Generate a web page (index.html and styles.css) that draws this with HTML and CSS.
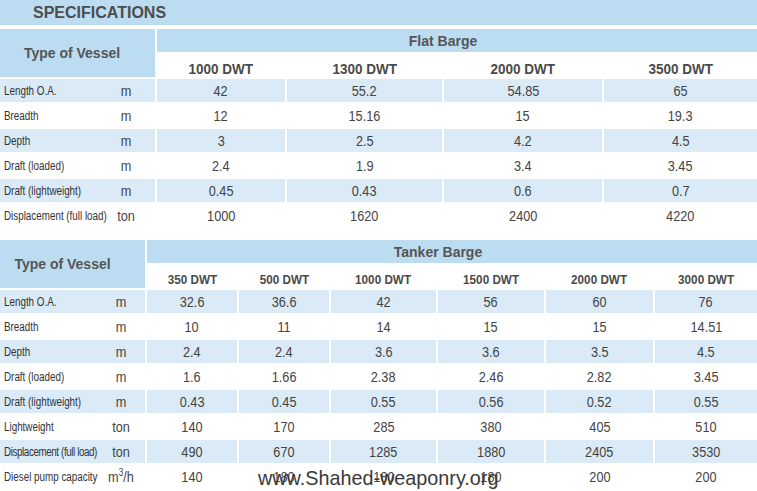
FILE: index.html
```html
<!DOCTYPE html>
<html lang="en">
<head>
<meta charset="utf-8">
<title>Specifications</title>
<link rel="stylesheet" href="styles.css">
</head>
<body>
<div class="page">
  <header class="title-bar"><h1>SPECIFICATIONS</h1></header>

  <section class="spec spec-flat">
    <div class="vessel-head">Type of Vessel</div>
    <div class="band">Flat Barge</div>
    <div class="dwt"><span>1000 DWT</span></div>
    <div class="dwt"><span>1300 DWT</span></div>
    <div class="dwt"><span>2000 DWT</span></div>
    <div class="dwt"><span>3500 DWT</span></div>

    <div class="row alt">
      <div class="label"><span class="name">Length O.A.</span><span class="unit">m</span></div>
      <div class="val"><span>42</span></div><div class="val"><span>55.2</span></div><div class="val"><span>54.85</span></div><div class="val"><span>65</span></div>
    </div>
    <div class="row">
      <div class="label"><span class="name">Breadth</span><span class="unit">m</span></div>
      <div class="val"><span>12</span></div><div class="val"><span>15.16</span></div><div class="val"><span>15</span></div><div class="val"><span>19.3</span></div>
    </div>
    <div class="row alt">
      <div class="label"><span class="name">Depth</span><span class="unit">m</span></div>
      <div class="val"><span>3</span></div><div class="val"><span>2.5</span></div><div class="val"><span>4.2</span></div><div class="val"><span>4.5</span></div>
    </div>
    <div class="row">
      <div class="label"><span class="name">Draft (loaded)</span><span class="unit">m</span></div>
      <div class="val"><span>2.4</span></div><div class="val"><span>1.9</span></div><div class="val"><span>3.4</span></div><div class="val"><span>3.45</span></div>
    </div>
    <div class="row alt">
      <div class="label"><span class="name">Draft (lightweight)</span><span class="unit">m</span></div>
      <div class="val"><span>0.45</span></div><div class="val"><span>0.43</span></div><div class="val"><span>0.6</span></div><div class="val"><span>0.7</span></div>
    </div>
    <div class="row">
      <div class="label"><span class="name">Displacement (full load)</span><span class="unit">ton</span></div>
      <div class="val"><span>1000</span></div><div class="val"><span>1620</span></div><div class="val"><span>2400</span></div><div class="val"><span>4220</span></div>
    </div>
  </section>

  <section class="spec spec-tanker">
    <div class="vessel-head">Type of Vessel</div>
    <div class="band">Tanker Barge</div>
    <div class="dwt"><span>350 DWT</span></div>
    <div class="dwt"><span>500 DWT</span></div>
    <div class="dwt"><span>1000 DWT</span></div>
    <div class="dwt"><span>1500 DWT</span></div>
    <div class="dwt"><span>2000 DWT</span></div>
    <div class="dwt"><span>3000 DWT</span></div>

    <div class="row alt">
      <div class="label"><span class="name">Length O.A.</span><span class="unit">m</span></div>
      <div class="val"><span>32.6</span></div><div class="val"><span>36.6</span></div><div class="val"><span>42</span></div><div class="val"><span>56</span></div><div class="val"><span>60</span></div><div class="val"><span>76</span></div>
    </div>
    <div class="row">
      <div class="label"><span class="name">Breadth</span><span class="unit">m</span></div>
      <div class="val"><span>10</span></div><div class="val"><span>11</span></div><div class="val"><span>14</span></div><div class="val"><span>15</span></div><div class="val"><span>15</span></div><div class="val"><span>14.51</span></div>
    </div>
    <div class="row alt">
      <div class="label"><span class="name">Depth</span><span class="unit">m</span></div>
      <div class="val"><span>2.4</span></div><div class="val"><span>2.4</span></div><div class="val"><span>3.6</span></div><div class="val"><span>3.6</span></div><div class="val"><span>3.5</span></div><div class="val"><span>4.5</span></div>
    </div>
    <div class="row">
      <div class="label"><span class="name">Draft (loaded)</span><span class="unit">m</span></div>
      <div class="val"><span>1.6</span></div><div class="val"><span>1.66</span></div><div class="val"><span>2.38</span></div><div class="val"><span>2.46</span></div><div class="val"><span>2.82</span></div><div class="val"><span>3.45</span></div>
    </div>
    <div class="row alt">
      <div class="label"><span class="name">Draft (lightweight)</span><span class="unit">m</span></div>
      <div class="val"><span>0.43</span></div><div class="val"><span>0.45</span></div><div class="val"><span>0.55</span></div><div class="val"><span>0.56</span></div><div class="val"><span>0.52</span></div><div class="val"><span>0.55</span></div>
    </div>
    <div class="row">
      <div class="label"><span class="name">Lightweight</span><span class="unit">ton</span></div>
      <div class="val"><span>140</span></div><div class="val"><span>170</span></div><div class="val"><span>285</span></div><div class="val"><span>380</span></div><div class="val"><span>405</span></div><div class="val"><span>510</span></div>
    </div>
    <div class="row alt">
      <div class="label"><span class="name name-tight">Displacement (full load)</span><span class="unit">ton</span></div>
      <div class="val"><span>490</span></div><div class="val"><span>670</span></div><div class="val"><span>1285</span></div><div class="val"><span>1880</span></div><div class="val"><span>2405</span></div><div class="val"><span>3530</span></div>
    </div>
    <div class="row">
      <div class="label"><span class="name">Diesel pump capacity</span><span class="unit">m<sup>3</sup>/h</span></div>
      <div class="val"><span>140</span></div><div class="val"><span>180</span></div><div class="val"><span>180</span></div><div class="val"><span>180</span></div><div class="val"><span>200</span></div><div class="val"><span>200</span></div>
    </div>
  </section>

  <div class="watermark">www.Shahed-weaponry.org</div>
</div>
</body>
</html>
```

FILE: styles.css
```css
html, body {
  margin: 0;
  padding: 0;
  background: #ffffff;
}

.page {
  position: relative;
  width: 757px;
  height: 491px;
  overflow: hidden;
  font-family: "Liberation Sans", Arial, sans-serif;
  color: #444;
}

.title-bar {
  height: 25px;
  margin-bottom: 4px;
  padding-left: 33px;
  background: #bcdcf1;
  display: flex;
  align-items: center;
}

.title-bar h1 {
  margin: 0;
  font-size: 16px;
  font-weight: bold;
  color: #4d4d4d;
}

.spec {
  display: grid;
  column-gap: 2px;
  row-gap: 2px;
  grid-auto-rows: 23px;
}

.spec-flat {
  grid-template-columns: 155px 128px 155px 158px 1fr;
  margin-bottom: 13px;
}

.spec-tanker {
  grid-template-columns: 145px 90px 90px 105px 106px 107px 1fr;
}

.vessel-head {
  grid-row: span 2;
  background: #bcdcf1;
  display: flex;
  align-items: center;
  justify-content: center;
  font-size: 14px;
  font-weight: bold;
  color: #555;
}

.spec-flat .vessel-head { padding-right: 11px; }
.spec-tanker .vessel-head { padding-right: 20px; }

.band {
  grid-column: 2 / -1;
  background: #bcdcf1;
  display: flex;
  align-items: center;
  justify-content: center;
  padding-right: 28px;
  font-size: 14px;
  font-weight: bold;
  color: #555;
}

.dwt {
  display: flex;
  align-items: flex-end;
  justify-content: center;
  font-weight: bold;
  color: #4a4a4a;
}

.dwt span {
  display: inline-block;
  transform: scaleX(0.9);
  white-space: nowrap;
}

.spec-flat .dwt {
  font-size: 15px;
}

.spec-tanker .dwt {
  font-size: 13px;
  padding-bottom: 1px;
}

.row { display: contents; }

.row.alt > div { background: #daeaf6; }

.label {
  display: flex;
  align-items: center;
  padding-left: 4px;
  min-width: 0;
}

.spec-flat .label { padding-right: 9px; }
.spec-tanker .label { padding-right: 4px; }

.name {
  flex: 1 1 0;
  min-width: 0;
  font-size: 12px;
  color: #333;
  white-space: nowrap;
  transform: scaleX(0.82);
  transform-origin: left center;
}

.name-tight { letter-spacing: -0.5px; }

.unit {
  flex: 0 0 40px;
  width: 40px;
  text-align: center;
  font-size: 15.5px;
  color: #444;
  white-space: nowrap;
  transform: scaleX(0.82);
}

.unit sup {
  font-size: 10px;
  vertical-align: 6px;
  line-height: 0;
}

.val {
  display: flex;
  align-items: center;
  justify-content: center;
  font-size: 15.5px;
  color: #444;
}

.val span {
  display: inline-block;
  transform: scaleX(0.82);
  white-space: nowrap;
}

.watermark {
  position: absolute;
  left: 258px;
  top: 467px;
  font-size: 19.8px;
  color: #3a3a3a;
  white-space: nowrap;
}
```
